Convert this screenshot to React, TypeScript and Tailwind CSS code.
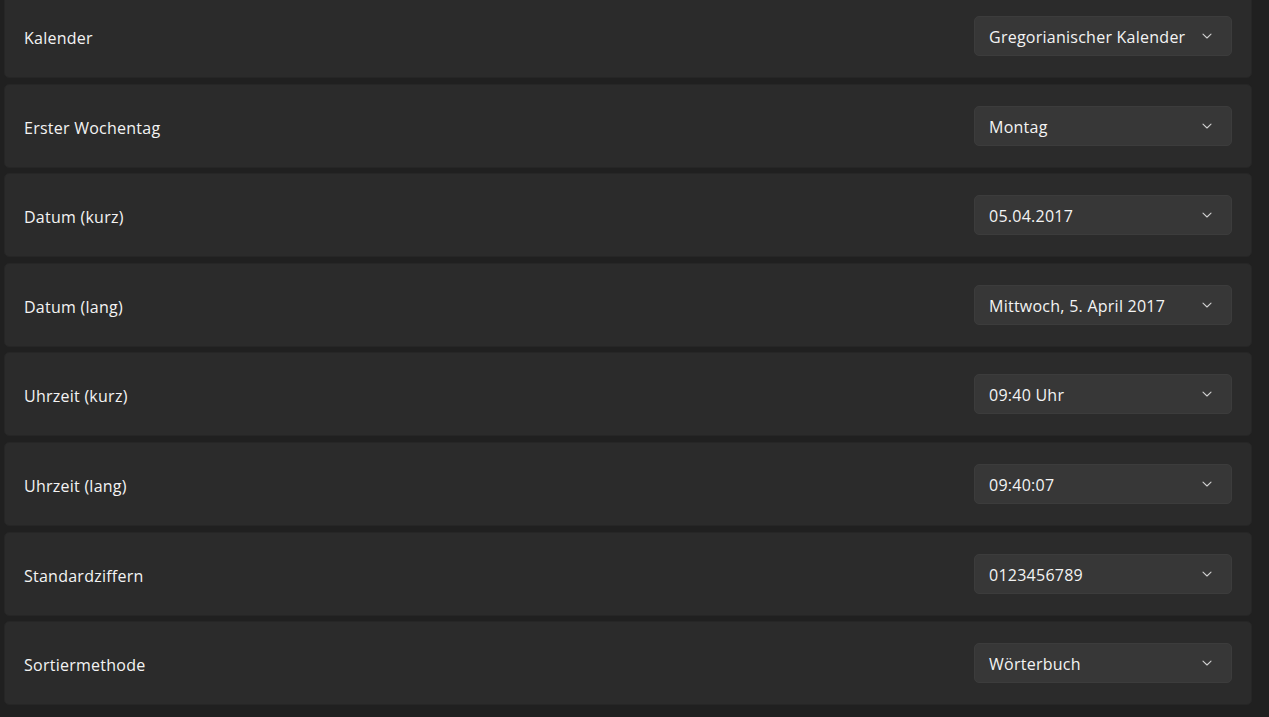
import React from "react";

const rows: [string, string][] = [
  ["Kalender", "Gregorianischer Kalender"],
  ["Erster Wochentag", "Montag"],
  ["Datum (kurz)", "05.04.2017"],
  ["Datum (lang)", "Mittwoch, 5. April 2017"],
  ["Uhrzeit (kurz)", "09:40 Uhr"],
  ["Uhrzeit (lang)", "09:40:07"],
  ["Standardziffern", "0123456789"],
  ["Sortiermethode", "Wörterbuch"],
];

function Chevron() {
  return (
    <svg width="12" height="12" viewBox="0 0 12 12" fill="none">
      <path d="M2 4.2 L6 8 L10 4.2" stroke="#d0d0d0" strokeWidth="1.1" strokeLinecap="round" strokeLinejoin="round" />
    </svg>
  );
}

export default function App() {
  return (
    <div
      className="w-[1269px] h-[717px] overflow-hidden bg-[#202020] text-white"
      style={{ fontFamily: '"Open Sans", "Noto Sans", sans-serif' }}
    >
      <div className="flex flex-col gap-[5.6px] pl-[4px] w-[1252px] -mt-[6px]">
        {rows.map(([label, value]) => (
          <div
            key={label}
            className="h-[84px] shrink-0 rounded-[5px] bg-[#2b2b2b] border border-[#262626] flex items-center justify-between pl-[19px] pr-[19px]"
          >
            <span className="text-[16px] text-[#f3f3f3] tracking-[0.25px] translate-y-[2px]">{label}</span>
            <div className="w-[258px] h-[40px] rounded-[5px] bg-[#373737] border border-[#3c3c3c] flex items-center justify-between pl-[14px] pr-[18px]">
              <span className="text-[16px] text-[#f3f3f3] tracking-[0.25px] translate-y-[1px]">{value}</span>
              <Chevron />
            </div>
          </div>
        ))}
      </div>
    </div>
  );
}
